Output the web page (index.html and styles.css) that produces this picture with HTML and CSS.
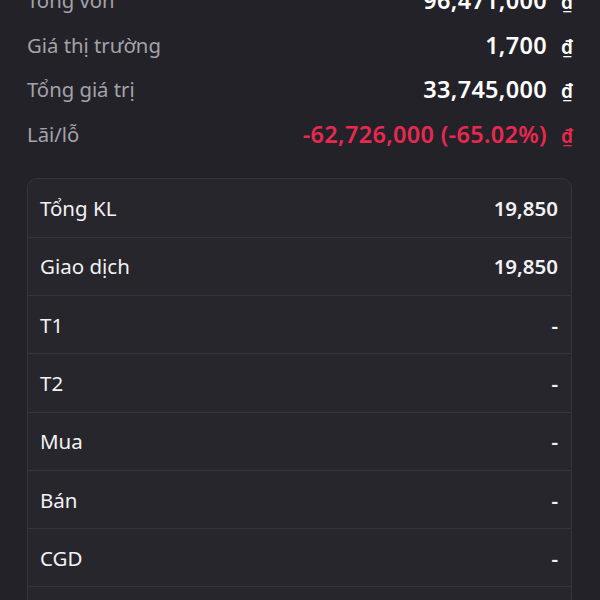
FILE: index.html
```html
<!DOCTYPE html>
<html lang="vi">
<head>
  <meta charset="UTF-8"/>
  <meta name="viewport" content="width=device-width, initial-scale=1.0"/>
  <title>Chi tiết cổ phiếu</title>
  <link rel="stylesheet" href="styles.css">
</head>
<body>

  <div class="summary">
    <div class="sum-row">
      <span class="sum-label">Tổng vốn</span>
      <span class="sum-value">96,471,000<span class="cur">₫</span></span>
    </div>
    <div class="sum-row">
      <span class="sum-label">Giá thị trường</span>
      <span class="sum-value">1,700<span class="cur">₫</span></span>
    </div>
    <div class="sum-row">
      <span class="sum-label">Tổng giá trị</span>
      <span class="sum-value">33,745,000<span class="cur">₫</span></span>
    </div>
    <div class="sum-row">
      <span class="sum-label">Lãi/lỗ</span>
      <span class="sum-value loss">-62,726,000 (-65.02%)<span class="cur">₫</span></span>
    </div>
  </div>

  <div class="card">
    <div class="card-row"><span>Tổng KL</span><span class="num">19,850</span></div>
    <div class="card-row"><span>Giao dịch</span><span class="num">19,850</span></div>
    <div class="card-row"><span>T1</span><span class="num">-</span></div>
    <div class="card-row"><span>T2</span><span class="num">-</span></div>
    <div class="card-row"><span>Mua</span><span class="num">-</span></div>
    <div class="card-row"><span>Bán</span><span class="num">-</span></div>
    <div class="card-row"><span>CGD</span><span class="num">-</span></div>
    <div class="card-row"><span>Cầm cố</span><span class="num">-</span></div>
  </div>

</body>
</html>
```

FILE: styles.css
```css
body {
  background: #232228;
  font-family: 'Noto Sans', sans-serif;
  color: #f2f2f4;
  margin: 0;
  overflow: hidden;
}
.summary {
  margin-top: -22px;
  padding: 0 27px 0 27px;
}
.sum-row {
  display: flex;
  justify-content: space-between;
  align-items: center;
  height: 44.6px;
}
.sum-label {
  color: #a3a2aa;
  font-size: 20.3px;
}
.sum-value {
  font-size: 23.5px;
  letter-spacing: 0.3px;
  font-weight: 600;
  color: #ffffff;
}
.sum-value.loss {
  color: #e8294f;
}
.cur {
  font-size: 19px;
  margin-left: 14px;
  letter-spacing: 0;
}
.card {
  margin: 22px 28px 0 27px;
  background: #27262d;
  border: 1px solid #35343b;
  border-radius: 10px;
}
.card-row {
  display: flex;
  justify-content: space-between;
  align-items: center;
  height: 57.3px;
  padding: 0 13px 0 12px;
  font-size: 20.5px;
  border-bottom: 1px solid #35343b;
}
.card-row .num {
  font-weight: 600;
}
```
